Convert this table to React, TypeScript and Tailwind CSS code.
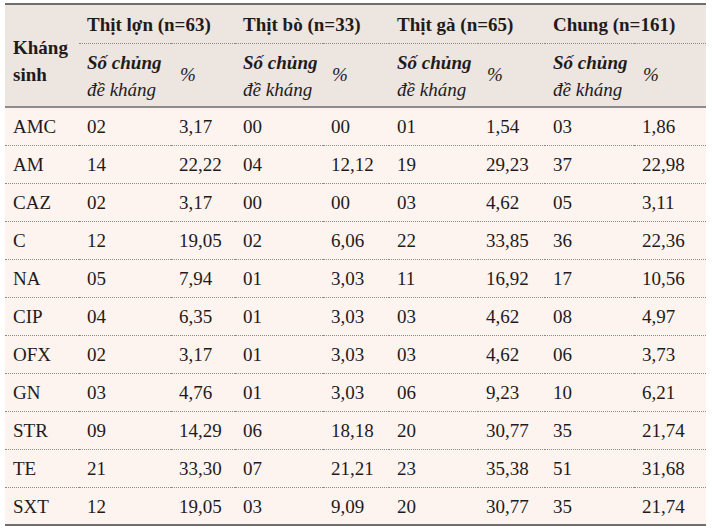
import React from "react";

const rows: string[][] = [
  ["AMC", "02", "3,17", "00", "00", "01", "1,54", "03", "1,86"],
  ["AM", "14", "22,22", "04", "12,12", "19", "29,23", "37", "22,98"],
  ["CAZ", "02", "3,17", "00", "00", "03", "4,62", "05", "3,11"],
  ["C", "12", "19,05", "02", "6,06", "22", "33,85", "36", "22,36"],
  ["NA", "05", "7,94", "01", "3,03", "11", "16,92", "17", "10,56"],
  ["CIP", "04", "6,35", "01", "3,03", "03", "4,62", "08", "4,97"],
  ["OFX", "02", "3,17", "01", "3,03", "03", "4,62", "06", "3,73"],
  ["GN", "03", "4,76", "01", "3,03", "06", "9,23", "10", "6,21"],
  ["STR", "09", "14,29", "06", "18,18", "20", "30,77", "35", "21,74"],
  ["TE", "21", "33,30", "07", "21,21", "23", "35,38", "51", "31,68"],
  ["SXT", "12", "19,05", "03", "9,09", "20", "30,77", "35", "21,74"],
];

const groups = ["Thịt lợn (n=63)", "Thịt bò (n=33)", "Thịt gà (n=65)", "Chung (n=161)"];
const widths = [74, 92, 64, 88, 66, 89, 67, 89, 72];

export default function App() {
  return (
    <div className="w-[712px] h-[532px] bg-white pt-[3px] pl-[5px]">
      <table
        className="w-[701px] table-fixed border-collapse text-[19px] text-[#1f1b1c]"
        style={{ fontFamily: '"Liberation Serif", "Times New Roman", serif' }}
      >
        <colgroup>
          {widths.map((w, i) => (
            <col key={i} style={{ width: w }} />
          ))}
        </colgroup>
        <thead className="bg-[#ede5e0]">
          <tr className="h-[39px] border-t-2 border-t-[#6e6e6e]">
            <th
              rowSpan={2}
              className="pl-[8px] pt-[10px] text-left align-middle font-bold leading-[27px]"
            >
              Kháng
              <br />
              sinh
            </th>
            {groups.map((g) => (
              <th
                key={g}
                colSpan={2}
                className="border-b border-dotted border-b-[#8a8a8a] pl-[8px] pt-[2px] text-left align-middle font-bold leading-none whitespace-nowrap"
              >
                {g}
              </th>
            ))}
          </tr>
          <tr className="h-[64px] border-b-2 border-b-[#8c8c8c]">
            {groups.map((g) => (
              <React.Fragment key={g}>
                <th className="pl-[8px] pt-[2px] text-left align-middle font-normal leading-[27px] whitespace-nowrap">
                  <span className="font-bold italic">Số chủng</span>
                  <br />
                  <span className="italic">đề kháng</span>
                </th>
                <th className="pl-[9px] text-left align-middle font-normal italic">%</th>
              </React.Fragment>
            ))}
          </tr>
        </thead>
        <tbody className="bg-[#fdf3ef]">
          {rows.map((r, i) => (
            <tr
              key={i}
              className={
                i === rows.length - 1
                  ? "h-[38px] border-b-2 border-b-[#6e6e6e]"
                  : "h-[38px] border-b border-dotted border-b-[#8a8a8a]"
              }
            >
              {r.map((c, j) => (
                <td key={j} className="pl-[8px] pt-[1px] text-left align-middle leading-none whitespace-nowrap">
                  {c}
                </td>
              ))}
            </tr>
          ))}
        </tbody>
      </table>
    </div>
  );
}
